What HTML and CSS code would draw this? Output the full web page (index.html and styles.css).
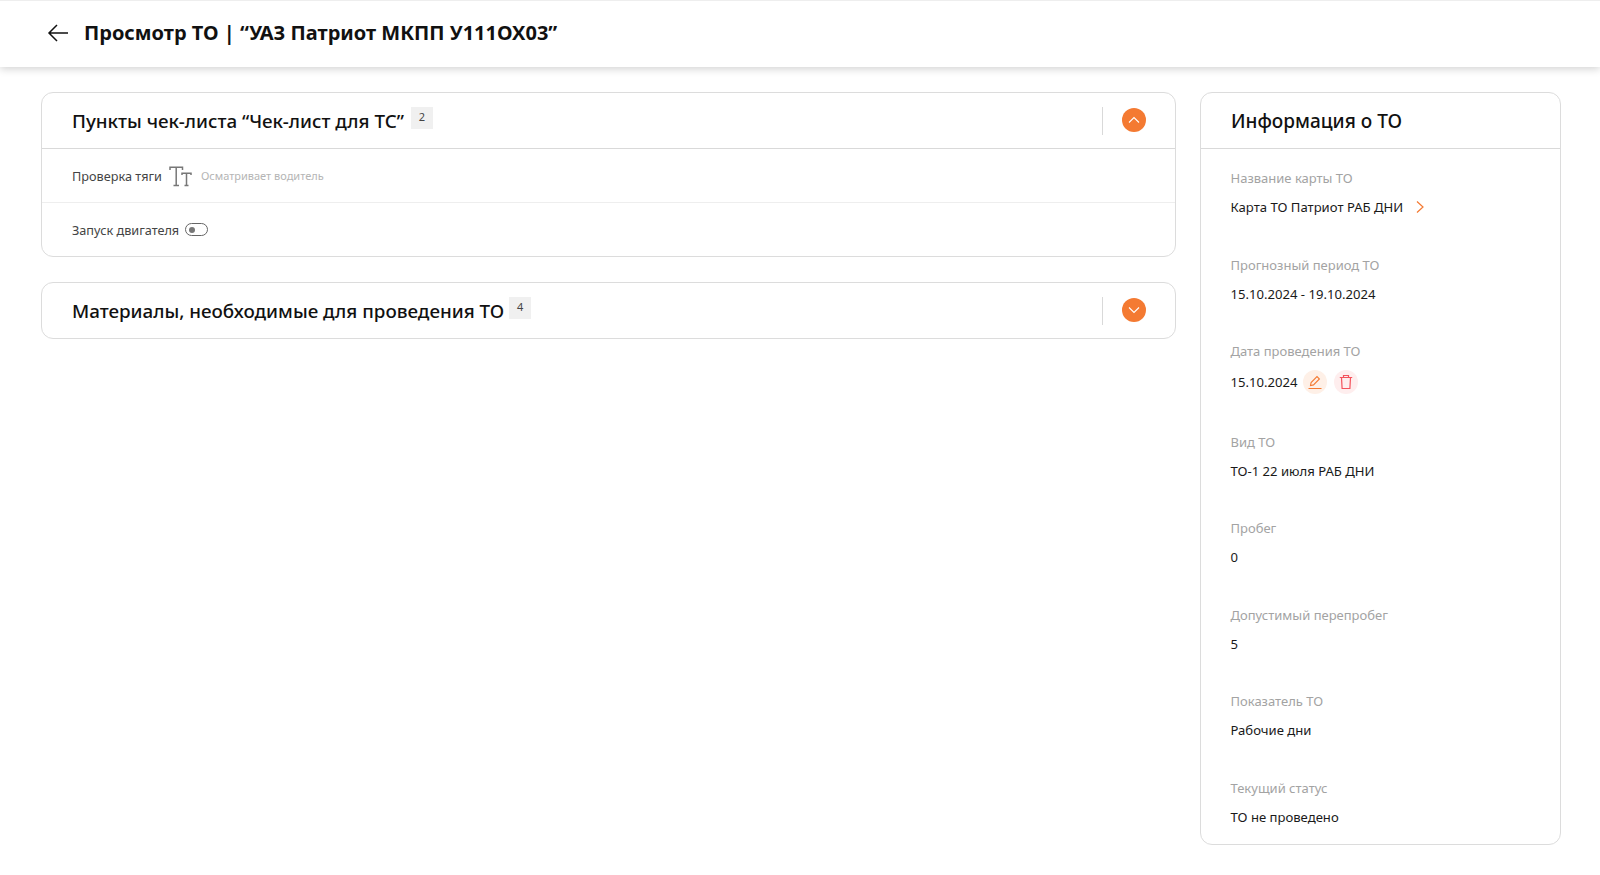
FILE: index.html
```html
<!DOCTYPE html>
<html lang="ru">
  <head>
    <meta charset="UTF-8" />
    <title>Просмотр ТО</title>
    <link rel="stylesheet" href="styles.css">
  </head>
  <body>
    <header class="topbar">
      <svg class="back-icon" width="24" height="24" viewBox="0 0 24 24" fill="none" stroke="#111" stroke-width="1.5">
        <path d="M22 12H3M11 4l-8 8 8 8" />
      </svg>
      <h1>Просмотр ТО | “УАЗ Патриот МКПП У111ОХ03”</h1>
    </header>

    <main class="content">
      <div class="left-col">
        <section class="card">
          <div class="card-head">
            <h2>Пункты чек-листа “Чек-лист для ТС”</h2>
            <span class="counter counter-wide">2</span>
            <div class="head-side">
              <button class="round-btn">
                <svg width="14" height="14" viewBox="0 0 14 14" fill="none" stroke="#fff" stroke-width="1.1"><path d="M2 9.5l5-5 5 5" /></svg>
              </button>
            </div>
          </div>
          <div class="check-row">
            <span class="check-name">Проверка тяги</span>
            <svg class="type-icon" width="23" height="21" viewBox="0 0 23 21" fill="none" stroke="#777" stroke-width="1.5">
              <path d="M1 4V1.2h12.5V4M7.2 1.2V19.5M4.5 19.5h5.5" />
              <path d="M13 9V7.2h9V9M17.5 7.2v12.3M15.5 19.5h4" />
            </svg>
            <span class="check-note">Осматривает водитель</span>
          </div>
          <div class="check-row check-row-last">
            <span class="check-name">Запуск двигателя</span>
            <span class="toggle"><span class="toggle-dot"></span></span>
          </div>
        </section>

        <section class="card">
          <div class="card-head card-head-closed">
            <h2>Материалы, необходимые для проведения ТО</h2>
            <span class="counter">4</span>
            <div class="head-side">
              <button class="round-btn">
                <svg width="14" height="14" viewBox="0 0 14 14" fill="none" stroke="#fff" stroke-width="1.1"><path d="M2 4.5l5 5 5-5" /></svg>
              </button>
            </div>
          </div>
        </section>
      </div>

      <aside class="card info-card">
        <div class="card-head">
          <h2>Информация о ТО</h2>
        </div>
        <div class="info-list">
          <div class="info-item">
            <div class="info-label">Название карты ТО</div>
            <div class="info-value">
              Карта ТО Патриот РАБ ДНИ
              <svg class="link-arrow" width="10" height="14" viewBox="0 0 10 14" fill="none" stroke="#f47a32" stroke-width="1.2"><path d="M2 1.5L8 7l-6 5.5" /></svg>
            </div>
          </div>
          <div class="info-item">
            <div class="info-label">Прогнозный период ТО</div>
            <div class="info-value">15.10.2024 - 19.10.2024</div>
          </div>
          <div class="info-item info-item-date">
            <div class="info-label">Дата проведения ТО</div>
            <div class="info-value">
              15.10.2024
              <span class="mini-btn mini-edit">
                <svg width="16" height="16" viewBox="0 0 16 16" fill="none" stroke="#f47a32" stroke-width="1.1"><path d="M3.5 11.5l.6-3L10 2.6l2.4 2.4-5.9 5.9zM1.5 14.5h13" /></svg>
              </span>
              <span class="mini-btn mini-delete">
                <svg width="16" height="16" viewBox="0 0 16 16" fill="none" stroke="#f4525c" stroke-width="1.2"><path d="M1.8 3.5h12.4M3.5 3.5l.6 11h7.8l.6-11M5.5 3.5V1.5h5v2" /></svg>
              </span>
            </div>
          </div>
          <div class="info-item">
            <div class="info-label">Вид ТО</div>
            <div class="info-value">ТО-1 22 июля РАБ ДНИ</div>
          </div>
          <div class="info-item">
            <div class="info-label">Пробег</div>
            <div class="info-value">0</div>
          </div>
          <div class="info-item">
            <div class="info-label">Допустимый перепробег</div>
            <div class="info-value">5</div>
          </div>
          <div class="info-item">
            <div class="info-label">Показатель ТО</div>
            <div class="info-value">Рабочие дни</div>
          </div>
          <div class="info-item">
            <div class="info-label">Текущий статус</div>
            <div class="info-value">ТО не проведено</div>
          </div>
        </div>
      </aside>
    </main>
  </body>
</html>
```

FILE: styles.css
```css
body,
html {
  margin: 0;
  padding: 0;
  height: 100%;
  overflow: hidden;
  font-family: "Noto Sans", "Open Sans", sans-serif;
  background-color: #fff;
  color: #111;
}
.topbar {
  height: 67px;
  box-sizing: border-box;
  border-top: 1px solid #eee;
  display: flex;
  align-items: center;
  padding: 0 0 2px 46px;
  gap: 14px;
  background-color: #fff;
  box-shadow: 0 2px 8px rgba(0, 0, 0, 0.18);
}
.topbar h1 {
  margin: 0;
  font-size: 20px;
  font-weight: 700;
  line-height: 28px;
}
.content {
  display: flex;
  align-items: flex-start;
  gap: 24px;
  padding: 25px 39px 0 41px;
}
.left-col {
  flex: 1;
  display: flex;
  flex-direction: column;
  gap: 25px;
}
.card {
  border: 1px solid #dcdcdc;
  border-radius: 12px;
  background-color: #fff;
}
.card-head {
  height: 56px;
  box-sizing: border-box;
  display: flex;
  align-items: center;
  padding: 0 29px 0 30px;
  border-bottom: 1px solid #d9d9d9;
}
.card-head-closed {
  height: 55px;
  border-bottom: none;
}
.card-head h2 {
  margin: 0;
  font-size: 18.8px;
  font-weight: 500;
  line-height: 26px;
}
.info-card .card-head h2 {
  font-size: 19px;
}
.counter {
  width: 22px;
  height: 22px;
  margin: 0 0 6px 5px;
  background-color: #f0f0f0;
  font-size: 11px;
  line-height: 20px;
  text-align: center;
  color: #444;
}
.counter-wide {
  margin-left: 7px;
}
.head-side {
  margin-left: auto;
  height: 28px;
  padding-left: 19px;
  border-left: 1px solid #d9d9d9;
  display: flex;
  align-items: center;
}
.round-btn {
  width: 24px;
  height: 24px;
  margin-bottom: 2px;
  padding: 0;
  border: none;
  border-radius: 50%;
  background-color: #f47a32;
  display: flex;
  align-items: center;
  justify-content: center;
}
.check-row {
  height: 54px;
  box-sizing: border-box;
  display: flex;
  align-items: center;
  padding: 0 30px;
  border-bottom: 1px solid #eee;
  font-size: 12.7px;
}
.check-row-last {
  height: 53px;
  border-bottom: none;
}
.check-name {
  color: #444;
}
.type-icon {
  margin: 2px 9px 0 7px;
}
.check-note {
  font-size: 11px;
  color: #b5b5b5;
}
.toggle {
  width: 18px;
  height: 11px;
  margin-left: 6px;
  border: 1px solid #666;
  border-radius: 7px;
  display: flex;
  align-items: center;
  padding-left: 3px;
}
.toggle-dot {
  width: 6px;
  height: 6px;
  border-radius: 50%;
  background-color: #777;
}
.info-card {
  width: 361px;
  flex-shrink: 0;
  height: 753px;
  box-sizing: border-box;
}
.info-list {
  padding: 19px 29px 0 29.5px;
  display: flex;
  flex-direction: column;
  gap: 37.5px;
}
.info-label {
  font-size: 13px;
  line-height: 20px;
  color: #a3a3a3;
}
.info-value {
  margin-top: 9px;
  font-size: 13.1px;
  line-height: 20px;
  color: #1a1a1a;
  display: flex;
  align-items: center;
}
.info-item-date .info-value {
  height: 26px;
  margin: 8px 0 -1px;
}
.link-arrow {
  margin-left: 12px;
}
.mini-btn {
  width: 24px;
  height: 24px;
  border-radius: 50%;
  display: flex;
  align-items: center;
  justify-content: center;
}
.mini-edit {
  margin-left: 6px;
  background-color: #fef0e7;
}
.mini-delete {
  margin-left: 7px;
  background-color: #feeeee;
}
```
